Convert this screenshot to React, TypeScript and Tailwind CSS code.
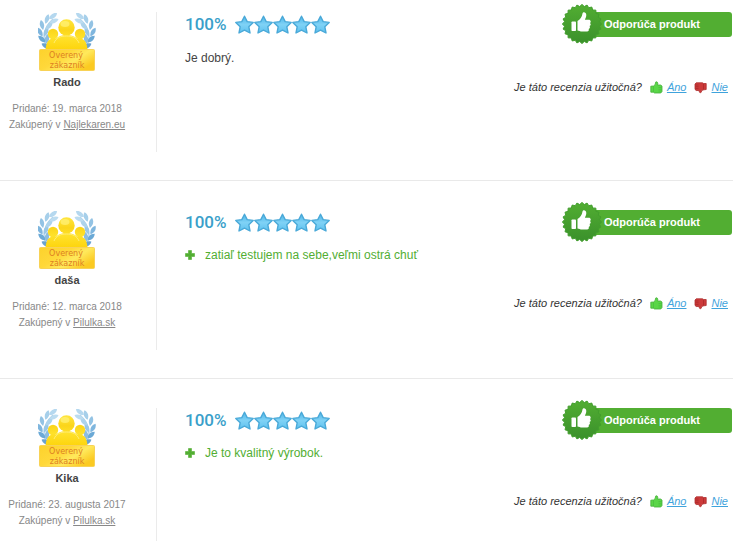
import React from 'react';

type Review = {
  name: string;
  date: string;
  shop: string;
  text?: string;
  pros?: string[];
};

const reviews: Review[] = [
  { name: 'Rado', date: '19. marca 2018', shop: 'Najlekaren.eu', text: 'Je dobrý.' },
  { name: 'daša', date: '12. marca 2018', shop: 'Pilulka.sk', pros: ['zatiaľ testujem na sebe,veľmi ostrá chuť'] },
  { name: 'Kika', date: '23. augusta 2017', shop: 'Pilulka.sk', pros: ['Je to kvalitný výrobok.'] },
];

// one laurel branch, the other side is mirrored
const leaves = [
  { x: 8, y: 34, r: -62, c: '#6aa2cf' },
  { x: 4, y: 27, r: -48, c: '#6ba9d6' },
  { x: 9, y: 27, r: 8, c: '#8dbde0' },
  { x: 2, y: 20, r: -30, c: '#7fb6de' },
  { x: 8, y: 20, r: 22, c: '#9ac7e5' },
  { x: 4, y: 13, r: -12, c: '#93c3e4' },
  { x: 11, y: 14, r: 45, c: '#add3eb' },
  { x: 9, y: 7, r: 18, c: '#a6cfea' },
  { x: 16, y: 9, r: 66, c: '#bcdcf0' },
  { x: 15, y: 4, r: 55, c: '#b5d8ef' },
];

function Branch() {
  return (
    <g>
      <path d="M12 38C4 31 3 18 15 7" fill="none" stroke="#a9cfe9" strokeWidth="1.2" />
      {leaves.map((l, i) => (
        <path key={i} d="M0 -5C3 -2 2.6 2 0 5C-2.6 2 -3 -2 0 -5Z" fill={l.c} transform={`translate(${l.x} ${l.y}) rotate(${l.r})`} />
      ))}
    </g>
  );
}

function VerifiedBadge() {
  return (
    <svg viewBox="0 0 58 60" className="w-[58px] h-[60px]" role="img" aria-label="Overený zákazník">
      <defs>
        <linearGradient id="people" gradientUnits="userSpaceOnUse" x1="0" y1="7" x2="0" y2="38">
          <stop offset="0" stopColor="#ffe640" />
          <stop offset="0.35" stopColor="#fbd51a" />
          <stop offset="0.6" stopColor="#ffe12a" />
          <stop offset="1" stopColor="#fdd40c" />
        </linearGradient>
        <linearGradient id="plate" x1="0" y1="0" x2="1" y2="0.6">
          <stop offset="0" stopColor="#fdd22c" />
          <stop offset="0.45" stopColor="#ffd83a" />
          <stop offset="0.7" stopColor="#ffe95c" />
          <stop offset="1" stopColor="#fbca22" />
        </linearGradient>
      </defs>
      <Branch />
      <g transform="translate(57 0) scale(-1 1)">
        <Branch />
      </g>
      <g fill="url(#people)">
        <circle cx="15" cy="22" r="5.2" />
        <circle cx="42" cy="22" r="5.2" />
        <path d="M7.5 38C8 31 10 27 15 26.5H42C47 27 49 31 49.5 38Z" />
        <path d="M16 30C18 25 22 23 28.500 23S39 25 41 30V38H16Z" />
        <circle cx="28.500" cy="15.500" r="8.200" />
      </g>
      <path d="M16 31C18 26 22 24 28.500 24S39 26 41 31" fill="none" stroke="#fff08a" strokeWidth="0.8" />
      <ellipse cx="27" cy="12" rx="4.500" ry="3" fill="#fff27a" opacity="0.700" />
      <rect x="1.500" y="37.500" width="55" height="21" rx="1" fill="url(#plate)" stroke="#f8d256" />
      <g fill="#dd7f22" fontFamily="'DejaVu Sans', sans-serif" fontSize="8" textAnchor="middle">
        <text x="28" y="46">Overený</text>
        <text x="29" y="56">zákazník</text>
      </g>
    </svg>
  );
}

function Stars() {
  return (
    <svg viewBox="0 0 95 20" className="w-[95px] h-5" role="img" aria-label="5 z 5">
      <defs>
        <linearGradient id="star" x1="0" y1="0" x2="0" y2="1">
          <stop offset="0" stopColor="#4fb6e8" />
          <stop offset="0.5" stopColor="#7fd2f6" />
          <stop offset="1" stopColor="#5ec1ee" />
        </linearGradient>
      </defs>
      {[0, 19, 38, 57, 76].map((x) => (
        <path
          key={x}
          transform={`translate(${x} 0)`}
          d="M9.5 1.2L12.2 6.6L18.2 7.4L13.8 11.7L15 18L9.5 15.2L4 18L5.200 11.700L0.800 7.400L6.800 6.600Z"
          fill="url(#star)"
          stroke="#4aa9d8"
          strokeWidth="1.4"
          strokeLinejoin="round"
        />
      ))}
    </svg>
  );
}

const teeth = Array.from({ length: 48 }, (_, i) => {
  const r = i % 2 ? 17.6 : 19.6;
  const a = (i * Math.PI) / 24;
  return `${(20 + r * Math.cos(a)).toFixed(2)},${(20 + r * Math.sin(a)).toFixed(2)}`;
}).join(' ');

function Recommended() {
  return (
    <div className="relative flex h-[25px] w-[142px] items-center rounded-[3px] bg-[#52ae32] pl-[14px] text-[11px] font-bold text-white">
      <svg viewBox="0 0 40 40" className="absolute -left-7 -top-2 h-10 w-10" aria-hidden="true">
        <defs>
          <linearGradient id="seal" x1="0" y1="0" x2="0" y2="1">
            <stop offset="0" stopColor="#52ae32" />
            <stop offset="1" stopColor="#3a902b" />
          </linearGradient>
        </defs>
        <polygon points={teeth} fill="url(#seal)" stroke="#429e2d" strokeWidth="1" strokeLinejoin="round" />
        <g transform="translate(0 -1.5)" fill="#fff">
          <rect x="9.5" y="19" width="4.5" height="9.500" rx="0.8" />
          <path d="M15.5 18.5C18 17 20 14.500 20.500 11C20.800 8.900 24.300 9.200 24.300 12.500C24.300 14.500 23.300 16 22.900 17.300H26.800C29 17.300 29.300 20 27.900 20.600C29.200 21.400 28.900 23.300 27.500 23.600C28.400 24.600 27.900 26.200 26.700 26.500C27.200 27.800 26.500 29 25.100 29H20C18.200 29 17 28.300 15.500 28Z" />
        </g>
      </svg>
      Odporúča produkt
    </div>
  );
}

function ThumbUp() {
  return (
    <svg viewBox="0 0 13 13" className="h-[13px] w-[13px]" aria-hidden="true">
      <path
        d="M0.800 5.200L3.500 5L5.200 3.400L5.600 1.200C6 0.500 7.700 0.800 7.800 2.200L7.600 4H10.500L12 5V10.500L10.800 12H4.500L3.300 11.200H0.800Z"
        fill="#5ad648"
        stroke="#45ad3a"
        strokeWidth="0.8"
        strokeLinejoin="round"
      />
      <path d="M3.500 5.500V11M8.500 6.500H11.500M8.500 8.300H11.500M8.500 10H11.500" stroke="#45b83a" strokeWidth="0.600" />
    </svg>
  );
}

function ThumbDown() {
  return (
    <svg viewBox="0 0 13 13" className="h-[13px] w-[13px]" aria-hidden="true">
      <path
        d="M1 3L2.200 1.800H8.500L9.700 2.500H12.200V8.500L9.800 8.800L7.600 9.600L7.300 11.200C6.800 12 5.200 11.700 5.200 10.500L5.300 9.500H2.200L1 8.400Z"
        fill="#cc3a3a"
        stroke="#ad2e2e"
        strokeWidth="0.8"
        strokeLinejoin="round"
      />
      <path d="M9.500 2.800V8.500M1.500 4H4.500M1.500 5.800H4.500M1.500 7.600H4.500" stroke="#9f2525" strokeWidth="0.600" />
    </svg>
  );
}

function Plus() {
  return (
    <svg viewBox="0 0 10 10" className="h-[10px] w-[10px]" aria-hidden="true">
      <path d="M3.5 0.5H6.5V3.5H9.5V6.5H6.5V9.5H3.5V6.5H0.5V3.5H3.5Z" fill="#52ae32" stroke="#52ae32" strokeWidth="0.6" strokeLinejoin="round" />
    </svg>
  );
}

function ReviewRow({ review }: { review: Review }) {
  return (
    <article className="flex border-b border-[#e9e9e9] pt-[29px] pb-7 first:pt-3">
      <div className="flex w-[157px] shrink-0 border-r border-[#ebebeb] pr-[22px]">
        <div className="flex h-[140px] w-full flex-col items-center text-center text-[10px] leading-4 text-[#888]">
          <VerifiedBadge />
          <strong className="mt-0.5 mb-[11px] text-[11px] text-[#444]">{review.name}</strong>
          <p>Pridané: {review.date}</p>
          <p>
            Zakúpený v <a href="#" className="underline">{review.shop}</a>
          </p>
        </div>
      </div>
      <div className="min-w-0 flex-1 pr-px pl-7">
        <div className="flex h-[25px] items-center justify-between">
          <div className="flex items-center gap-2">
            <span className="font-[Roboto,sans-serif] text-[17px] font-medium text-[#3a9fca]">100%</span>
            <Stars />
          </div>
          <Recommended />
        </div>
        {review.text && <p className="my-[11px] text-xs leading-5 text-[#444]">{review.text}</p>}
        {review.pros && (
          <ul className="mt-[10px] mb-[30px] text-xs leading-5 text-[#52ae32]">
            {review.pros.map((pro) => (
              <li key={pro} className="flex items-center gap-[10px]">
                <Plus />
                {pro}
              </li>
            ))}
          </ul>
        )}
        <div className="flex items-center justify-end pr-1 text-[11px] leading-4 italic text-[#333]">
          <span className="mr-2">Je táto recenzia užitočná?</span>
          <ThumbUp />
          <a href="#" className="mr-2 ml-1 text-[#3fa3dc] underline">Áno</a>
          <ThumbDown />
          <a href="#" className="ml-1 text-[#3fa3dc] underline">Nie</a>
        </div>
      </div>
    </article>
  );
}

export default function App() {
  return (
    <main className="h-screen overflow-hidden bg-white pr-[17px] font-['Liberation_Sans',Arial,sans-serif]">
      {reviews.map((review) => (
        <ReviewRow key={review.name} review={review} />
      ))}
    </main>
  );
}
